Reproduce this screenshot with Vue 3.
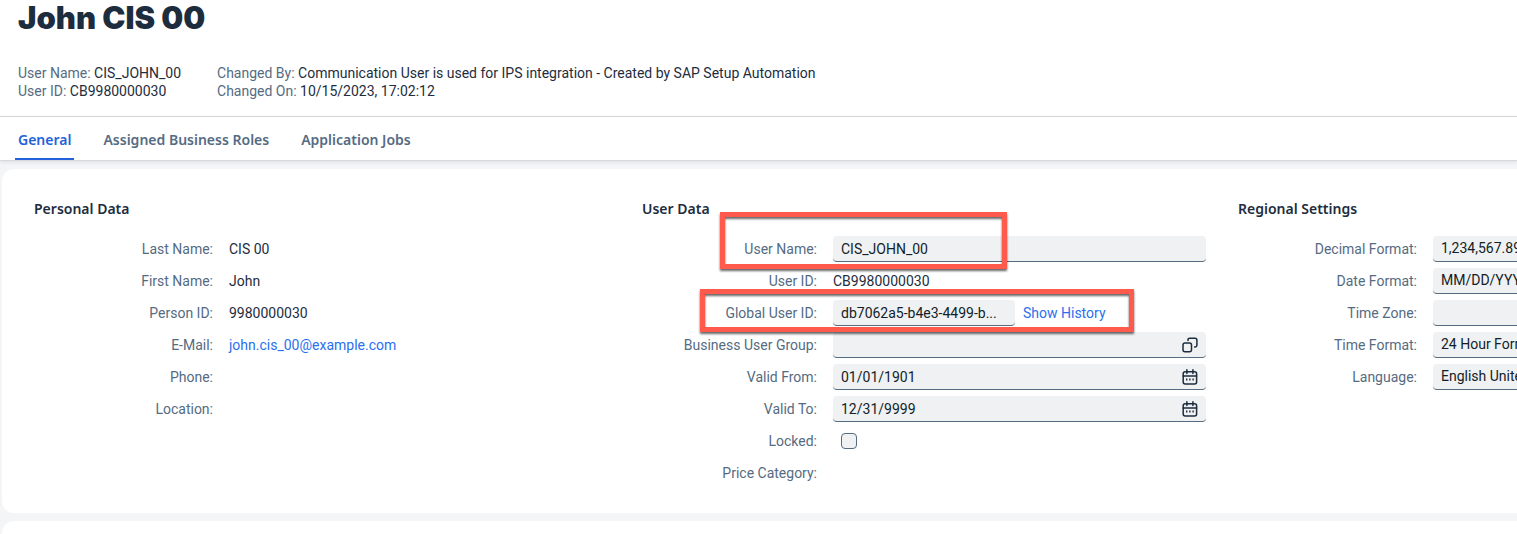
<script setup>
import { ref } from 'vue'

const tabs = ['General', 'Assigned Business Roles', 'Application Jobs']
const activeTab = ref('General')

const personal = [
  { label: 'Last Name:', value: 'CIS 00' },
  { label: 'First Name:', value: 'John' },
  { label: 'Person ID:', value: '9980000030' },
  { label: 'E-Mail:', value: 'john.cis_00@example.com', link: true },
  { label: 'Phone:', value: '' },
  { label: 'Location:', value: '' },
]

const regional = [
  { id: 'decimal-format', label: 'Decimal Format:', value: '1,234,567.89' },
  { id: 'date-format', label: 'Date Format:', value: 'MM/DD/YYYY' },
  { id: 'time-zone', label: 'Time Zone:', value: '' },
  { id: 'time-format', label: 'Time Format:', value: '24 Hour Format' },
  { id: 'language', label: 'Language:', value: 'English United States' },
]

const userName = ref('CIS_JOHN_00')
const globalId = ref('db7062a5-b4e3-4499-b...')
const group = ref('')
const dates = ref([
  { id: 'valid-from', label: 'Valid From:', value: '01/01/1901' },
  { id: 'valid-to', label: 'Valid To:', value: '12/31/9999' },
])
const locked = ref(false)
</script>

<template>
  <div class="page">
    <header class="header">
      <h1>John CIS 00</h1>
      <div class="facts">
        <div>
          <p><span>User Name:</span> CIS_JOHN_00</p>
          <p><span>User ID:</span> CB9980000030</p>
        </div>
        <div>
          <p><span>Changed By:</span> Communication User is used for IPS integration - Created by SAP Setup Automation</p>
          <p><span>Changed On:</span> 10/15/2023, 17:02:12</p>
        </div>
      </div>
    </header>

    <nav class="tabs">
      <button
        v-for="tab in tabs"
        :key="tab"
        type="button"
        :class="{ active: tab === activeTab }"
        @click="activeTab = tab"
      >{{ tab }}</button>
    </nav>

    <main class="content">
      <div class="card columns">
        <section>
          <h2>Personal Data</h2>
          <div v-for="item in personal" :key="item.label" class="row">
            <span class="label">{{ item.label }}</span>
            <a v-if="item.link" href="#">{{ item.value }}</a>
            <span v-else>{{ item.value }}</span>
          </div>
        </section>

        <section class="user-data">
          <h2>User Data</h2>
          <div class="row">
            <label class="label" for="user-name">User Name:</label>
            <input id="user-name" v-model="userName" class="field" type="text">
            <div class="mark mark-name"></div>
          </div>
          <div class="row">
            <span class="label">User ID:</span>
            <span>CB9980000030</span>
          </div>
          <div class="row">
            <label class="label" for="global-id">Global User ID:</label>
            <div class="inline">
              <input id="global-id" v-model="globalId" class="field short" type="text">
              <a href="#">Show History</a>
            </div>
            <div class="mark mark-id"></div>
          </div>
          <div class="row">
            <label class="label" for="group">Business User Group:</label>
            <div class="field combo">
              <input id="group" v-model="group" type="text">
              <button type="button" aria-label="Select group">
                <svg viewBox="0 0 16 16" width="16" height="16">
                  <rect x="1" y="6" width="8.5" height="8.8" rx="2" />
                  <path d="M6 3.4V2.9Q6 1.2 7.7 1.2H13.1Q14.9 1.2 14.9 3V8.2Q14.9 9.9 13.2 9.9H12.6" />
                </svg>
              </button>
            </div>
          </div>
          <div v-for="date in dates" :key="date.id" class="row">
            <label class="label" :for="date.id">{{ date.label }}</label>
            <div class="field combo">
              <input :id="date.id" v-model="date.value" type="text">
              <button type="button" aria-label="Open calendar">
                <svg viewBox="0 0 16 16" width="16" height="16">
                  <rect x="1.2" y="2.7" width="13.4" height="12.3" rx="2" />
                  <path d="M1.2 7H14.6M4.9 0.8V4.4M10.9 0.8V4.4" />
                  <path class="dots" d="M4 10.6H5.4M7.2 10.6H8.6M10.4 10.6H11.8" />
                </svg>
              </button>
            </div>
          </div>
          <div class="row">
            <label class="label" for="locked">Locked:</label>
            <input id="locked" v-model="locked" class="check" type="checkbox">
          </div>
          <div class="row">
            <span class="label">Price Category:</span>
          </div>
        </section>

        <section>
          <h2>Regional Settings</h2>
          <div v-for="item in regional" :key="item.id" class="row">
            <label class="label" :for="item.id">{{ item.label }}</label>
            <select :id="item.id" class="field wide">
              <option>{{ item.value }}</option>
            </select>
          </div>
        </section>
      </div>
      <div class="card next"></div>
    </main>
  </div>
</template>

<style>
body {
  margin: 0;
  background: #f4f5f7;
}
</style>

<style scoped>
.page {
  height: 100vh;
  overflow: hidden;
  color: #1d2d3e;
  font: 14px/18px Roboto, "Liberation Sans", sans-serif;
}

.header {
  padding: 0 18px 16px;
  background: #fff;
  border-bottom: 1px solid #d9d9d9;
}

h1 {
  margin: 0 0 28px;
  font: 900 31px/36px Inter, sans-serif;
}

.facts {
  display: flex;
  gap: 36px;
}

p {
  margin: 0;
}

p span,
.label {
  color: #556b82;
}

.tabs {
  position: relative;
  display: flex;
  gap: 26px;
  padding: 0 15px;
  background: #fff;
  border-bottom: 1px solid #d9d9d9;
  box-shadow: 0 1px 4px rgba(34, 53, 72, 0.12);
}

.tabs button {
  height: 43px;
  padding: 4px 3px 0;
  border: 0;
  border-bottom: 2px solid transparent;
  background: none;
  color: #556b82;
  font: 600 14px/18px "Noto Sans", sans-serif;
}

.tabs .active {
  border-color: #2362da;
  color: #2362da;
}

.content {
  padding: 8px 0 0 2px;
}

.card {
  background: #fff;
  border-radius: 12px 0 0 12px;
}

.columns {
  display: grid;
  grid-template-columns: minmax(0, 576fr) minmax(0, 564fr) minmax(0, 279fr);
  gap: 32px;
  padding: 31px 0 24px 32px;
}

.next {
  height: 40px;
  margin-top: 8px;
}

h2 {
  margin: 0 0 15px;
  font: 600 14px/18px "Noto Sans", sans-serif;
}

.row {
  position: relative;
  display: grid;
  grid-template-columns: 179px minmax(0, 1fr);
  column-gap: 16px;
  align-items: center;
  height: 32px;
}

.user-data .row {
  grid-template-columns: 175px minmax(0, 1fr);
}

.label {
  text-align: right;
}

a {
  color: #2a6fef;
  text-decoration: none;
}

.field {
  box-sizing: border-box;
  width: 100%;
  height: 26px;
  padding: 0 8px;
  border: 0;
  border-bottom: 1px solid #556b82;
  border-radius: 4px;
  outline: 0;
  background: #eff1f2;
  color: #131e29;
  font: inherit;
  appearance: none;
}

.short {
  width: 182px;
}

.wide {
  width: 372px;
  padding-bottom: 1px;
}

.inline {
  display: flex;
  align-items: center;
  gap: 8px;
}

.combo {
  display: flex;
  align-items: center;
}

.combo input {
  flex: 1;
  min-width: 0;
  padding: 0;
  border: 0;
  outline: 0;
  background: none;
  color: inherit;
  font: inherit;
}

.combo button {
  display: flex;
  padding: 0;
  border: 0;
  background: none;
}

svg {
  fill: none;
  stroke: #1d2d3e;
  stroke-width: 1.5;
  stroke-linecap: round;
}

.dots {
  stroke-width: 2;
  stroke-linecap: butt;
}

.check {
  width: 16px;
  height: 16px;
  margin: 0 8px;
  border: 1px solid #556b82;
  border-radius: 4px;
  background: #eff1f2;
  appearance: none;
}

.mark {
  position: absolute;
  z-index: 1;
  box-sizing: border-box;
  border: 5px solid #ff5a4c;
  filter: drop-shadow(0 2px 1px rgba(0, 0, 0, 0.6));
  pointer-events: none;
}

.mark-name {
  top: -21px;
  left: 78px;
  width: 287px;
  height: 57px;
}

.mark-id {
  top: -8px;
  left: 58px;
  width: 434px;
  height: 43px;
}
</style>
